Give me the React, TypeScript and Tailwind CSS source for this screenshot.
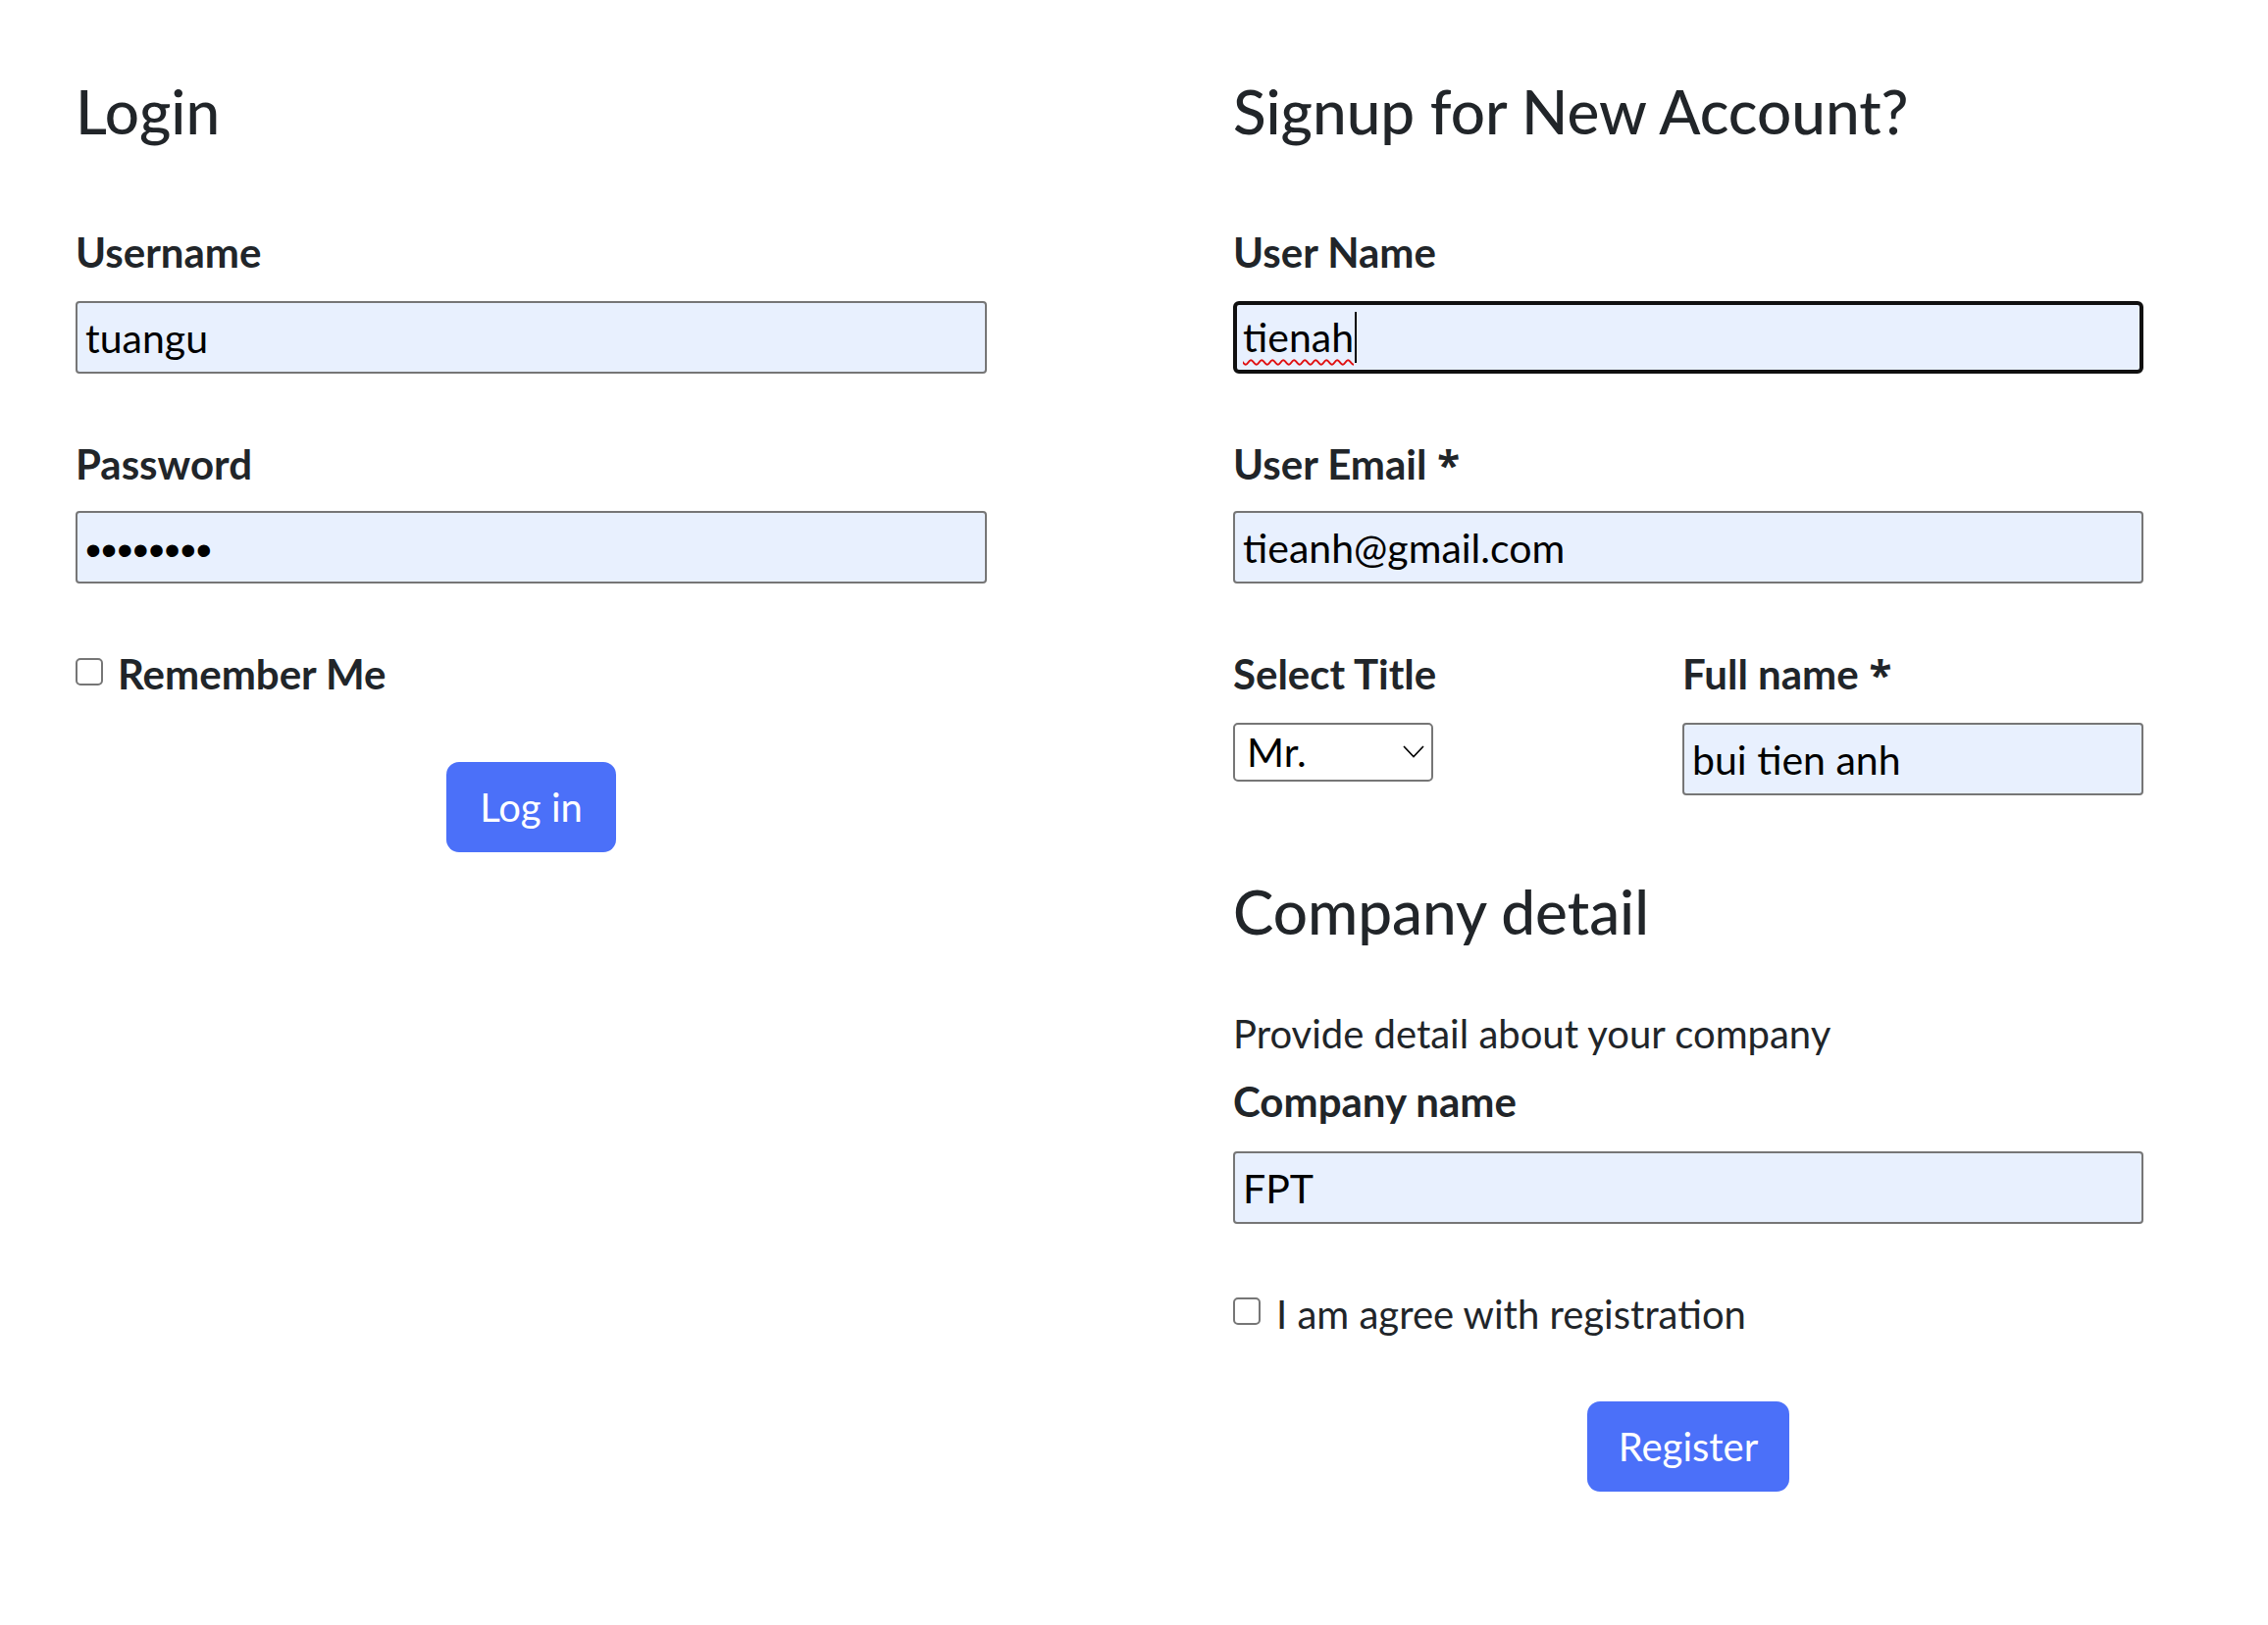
import React from 'react';

const labelCls = 'text-[42px] leading-[48px] font-bold text-[#212529]';
const headingCls = 'text-[62px] leading-[72px] font-medium text-[#212529]';
const inputCls =
  'h-[74px] w-full rounded-[4px] border-2 border-[#767676] bg-[#e8f0fe] px-[8px] text-[41px] leading-[48px] text-black outline-none';
const checkCls =
  'appearance-none shrink-0 w-[28px] h-[28px] rounded-[5px] border-2 border-[#767676] bg-white';
const btnCls =
  'self-center h-[92px] flex items-center justify-center rounded-[13px] bg-[#4b70f9] text-[40px] leading-[60px] text-white';

function Star() {
  return <span className="font-['Noto_Sans',sans-serif] font-bold"> *</span>;
}

function LoginForm() {
  return (
    <div className="w-[929px] flex flex-col">
      <h2 className={headingCls}>Login</h2>
      <label className={`mt-[84px] ${labelCls}`}>Username</label>
      <input className={`mt-[26px] ${inputCls}`} readOnly value="tuangu" />
      <label className={`mt-[68px] ${labelCls}`}>Password</label>
      <input
        className={`mt-[24px] ${inputCls} pt-[6px] font-['Liberation_Sans',sans-serif] text-[46px]`}
        type="password"
        readOnly
        value="12345678"
      />
      <div className="mt-[68px] flex items-start gap-[15px]">
        <input type="checkbox" className={`mt-[8px] ${checkCls}`} />
        <span className={labelCls}>Remember Me</span>
      </div>
      <button className={`mt-[66px] w-[173px] ${btnCls}`}>Log in</button>
    </div>
  );
}

function SignupForm() {
  return (
    <div className="w-[928px] flex flex-col">
      <h2 className={headingCls}>Signup for New Account?</h2>
      <label className={`mt-[84px] ${labelCls}`}>User Name</label>
      <div className="mt-[26px] h-[74px] flex items-center rounded-[6px] border-[4px] border-[#101010] bg-[#e8f0fe] pl-[6px]">
        <span className="text-[41px] leading-[48px] text-black underline decoration-wavy decoration-[#e01010] decoration-[2px] underline-offset-[7px]">
          tienah
        </span>
        <span className="ml-[1px] w-[2px] h-[52px] bg-black" />
      </div>
      <label className={`mt-[68px] ${labelCls}`}>
        User Email<Star />
      </label>
      <input className={`mt-[24px] ${inputCls}`} readOnly value="tieanh@gmail.com" />
      <div className="mt-[68px] flex">
        <div className="w-[458px] flex flex-col">
          <label className={labelCls}>Select Title</label>
          <div className="relative mt-[26px] w-[204px] h-[60px]">
            <select
              className="appearance-none w-full h-full rounded-[5px] border-2 border-[#767676] bg-white pl-[12px] text-[41px] leading-[48px] text-black outline-none"
              defaultValue="Mr."
            >
              <option>Mr.</option>
              <option>Mrs.</option>
              <option>Ms.</option>
            </select>
            <svg
              className="absolute left-[173px] top-[23px] pointer-events-none"
              width="22"
              height="13"
              viewBox="0 0 22 13"
              fill="none"
            >
              <polyline points="1,1 11,11.5 21,1" stroke="#000" strokeWidth="1.6" />
            </svg>
          </div>
        </div>
        <div className="flex-1 flex flex-col">
          <label className={labelCls}>
            Full name<Star />
          </label>
          <input className={`mt-[26px] ${inputCls}`} readOnly value="bui tien anh" />
        </div>
      </div>
      <h2 className={`mt-[82px] ${headingCls}`}>Company detail</h2>
      <p className="mt-[65px] text-[40px] leading-[48px] text-[#212529]">Provide detail about your company</p>
      <label className={`mt-[21px] ${labelCls}`}>Company name</label>
      <input className={`mt-[27px] ${inputCls}`} readOnly value="FPT" />
      <div className="mt-[68px] flex items-start gap-[16px]">
        <input type="checkbox" className={`mt-[7px] ${checkCls}`} />
        <span className="text-[40px] leading-[48px] text-[#212529]">I am agree with registration</span>
      </div>
      <button className={`mt-[65px] w-[206px] ${btnCls}`}>Register</button>
    </div>
  );
}

export default function App() {
  return (
    <div className="min-h-screen bg-white font-['Lato','Open_Sans',sans-serif] pt-[77px] pl-[77px] flex gap-[251px]">
      <LoginForm />
      <SignupForm />
    </div>
  );
}
